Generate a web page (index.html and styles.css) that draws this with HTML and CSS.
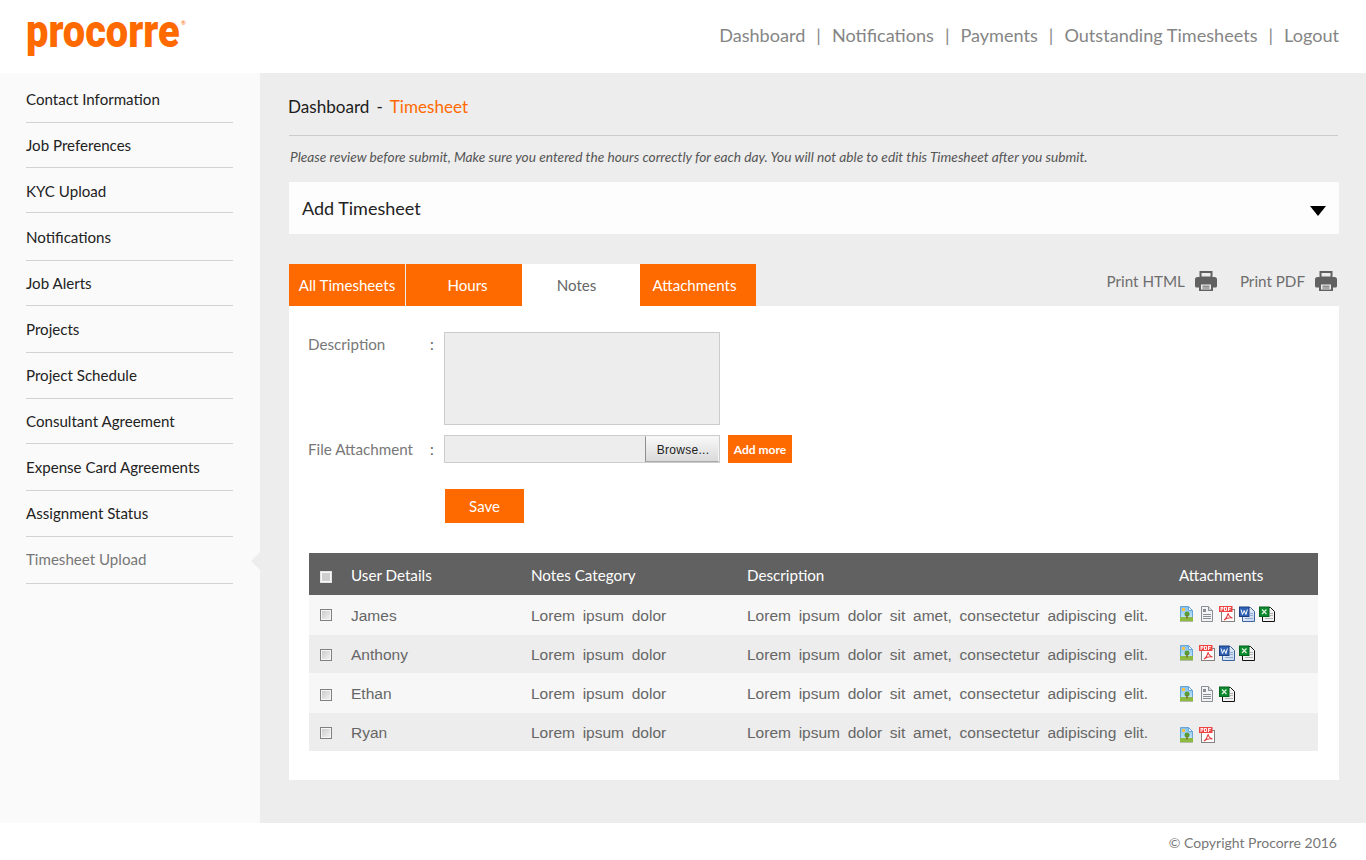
FILE: index.html
```html
<!DOCTYPE html>
<html lang="en">
<head>
<meta charset="utf-8">
<title>Procorre - Timesheet</title>
<link rel="stylesheet" href="styles.css">
</head>
<body>
<svg class="defs" width="0" height="0" aria-hidden="true">
  <defs>
    <linearGradient id="g-sky" x1="0" y1="0" x2="0" y2="1"><stop offset="0" stop-color="#7fc0ee"/><stop offset="1" stop-color="#d8effb"/></linearGradient>
    <linearGradient id="g-page" x1="0" y1="0" x2="1" y2="1"><stop offset="0" stop-color="#f2f6fc"/><stop offset="1" stop-color="#c3d5ee"/></linearGradient>
  </defs>
  <symbol id="i-img" viewBox="0 0 16 16">
    <path d="M1.500 .5h8l4 4v11h-12z" fill="url(#g-sky)" stroke="#6ba5d6"/>
    <path d="M9.500 .5v4h4z" fill="#f4f9fd" stroke="#6ba5d6"/>
    <rect x="1" y="11" width="13" height="4" fill="#8dba40"/>
    <rect x="1" y="15" width="13" height="1" fill="#b3bca6"/>
    <rect x="3" y="2" width="3" height="3" fill="#f7c04a"/>
    <circle cx="8" cy="8" r="2.500" fill="#5c9a33"/>
    <rect x="7.400" y="9.500" width="1.200" height="3" fill="#7a5a2c"/>
  </symbol>
  <symbol id="i-doc" viewBox="0 0 16 16">
    <path d="M2.500 .5h7l4 4v11h-11z" fill="#f2f4f7" stroke="#8b8f94"/>
    <path d="M9.500 .5v4h4" fill="#d8dce0" stroke="#8b8f94"/>
    <rect x="4" y="3" width="3" height="3" fill="#8b8f94"/>
    <path d="M4 8.500h8M4 10.500h8M4 12.500h8" stroke="#8b8f94"/>
  </symbol>
  <symbol id="i-pdf" viewBox="0 0 16 16">
    <rect x="2.500" y="3.500" width="13" height="12" fill="#fff" stroke="#85817f"/>
    <rect x="0" y="0" width="13.500" height="6" fill="#ee4444"/>
    <path d="M2 1v4M2 1.500h2v1.500H2M5.500 1v4M5.500 1.500H7.500V4.500H5.500M9.500 1v4M9.500 1.500h2.500M9.500 3.200h2" fill="none" stroke="#fff" stroke-width=".9"/>
    <path d="M5 14c2.500-1.500 3.500-4 4-7 .3 2.500 1.500 4 4.500 5-3-.5-6 0-8.500 2z" fill="none" stroke="#e53a3a" stroke-width="1.100"/>
  </symbol>
  <symbol id="i-word" viewBox="0 0 16 16">
    <path d="M3.500 1.500h8l4 4v10h-12z" fill="url(#g-page)" stroke="#3b659f"/>
    <path d="M11 7.500h3M11 9.500h3M6 12.500h8" stroke="#8fa9cf"/>
    <rect x=".5" y="1" width="9.500" height="9.500" fill="#2f62b6" stroke="#1d3f80"/>
    <path d="M2 3.500l1.500 5 1.700-4 1.700 4 1.500-5" fill="none" stroke="#fff" stroke-width="1"/>
  </symbol>
  <symbol id="i-xls" viewBox="0 0 16 16">
    <path d="M3.500 1.500h8l4 4v10h-12z" fill="#f1f1f1" stroke="#111"/>
    <path d="M11 7.500h3M11 9.500h3M6 12.500h8" stroke="#b5b5b5"/>
    <rect x=".5" y="1" width="9.500" height="9.500" fill="#0b8a2e" stroke="#07641f"/>
    <path d="M3 3.500l4.500 4.500M7.500 3.500L3 8" stroke="#dff3dd" stroke-width="1.300"/>
  </symbol>
  <symbol id="i-print" viewBox="0 0 22 20">
    <path d="M4.500 0h13v7h-13z" fill="#616161"/>
    <path d="M6.500 2h9v3.500h-9z" fill="#ededed"/>
    <path d="M2.500 6h17A2.500 2.500 0 0 1 22 8.500v6.500a1.500 1.500 0 0 1-1.500 1.500H17.500V12h-13v4.500H1.500A1.500 1.500 0 0 1 0 15V8.500A2.500 2.500 0 0 1 2.500 6z" fill="#616161"/>
    <path d="M4 12h14v8H4z" fill="#616161"/>
    <path d="M6 13.500h10V18.500H6z" fill="#ededed"/>
    <path d="M7.500 15.200h7M7.500 17h7" stroke="#616161"/>
  </symbol>
</svg>

<header class="topbar">
  <a class="logo" href="#"><span class="logo-word">procorre</span><span class="logo-mark">®</span></a>
  <nav class="topnav">
    <a href="#">Dashboard</a><span class="sep">|</span>
    <a href="#">Notifications</a><span class="sep">|</span>
    <a href="#">Payments</a><span class="sep">|</span>
    <a href="#">Outstanding Timesheets</a><span class="sep">|</span>
    <a href="#">Logout</a>
  </nav>
</header>

<div class="shell">
  <aside class="sidebar">
    <ul class="side-list">
      <li class="side-item"><a href="#">Contact Information</a></li>
      <li class="side-item"><a href="#">Job Preferences</a></li>
      <li class="side-item"><a href="#">KYC Upload</a></li>
      <li class="side-item"><a href="#">Notifications</a></li>
      <li class="side-item"><a href="#">Job Alerts</a></li>
      <li class="side-item"><a href="#">Projects</a></li>
      <li class="side-item"><a href="#">Project Schedule</a></li>
      <li class="side-item"><a href="#">Consultant Agreement</a></li>
      <li class="side-item"><a href="#">Expense Card Agreements</a></li>
      <li class="side-item"><a href="#">Assignment Status</a></li>
      <li class="side-item side-active"><a href="#">Timesheet Upload</a></li>
    </ul>
  </aside>

  <main class="content">
    <div class="crumbs"><span class="crumb-first">Dashboard</span><span class="crumb-sep">-</span><span class="crumb-now">Timesheet</span></div>
    <p class="notice">Please review before submit, Make sure you entered the hours correctly for each day. You will not able to edit this Timesheet after you submit.</p>
    <div class="accordion"><span>Add Timesheet</span><span class="caret"></span></div>

    <div class="tabbar">
      <div class="tabs">
        <a class="tab tab-all" href="#">All Timesheets</a>
        <a class="tab tab-hours" href="#">Hours</a>
        <a class="tab tab-notes" href="#">Notes</a>
        <a class="tab tab-att" href="#">Attachments</a>
      </div>
      <div class="prints">
        <a href="#" class="print print-html">Print HTML<svg class="print-ic"><use href="#i-print"/></svg></a>
        <a href="#" class="print">Print PDF<svg class="print-ic"><use href="#i-print"/></svg></a>
      </div>
    </div>

    <section class="panel">
      <div class="form-row row-desc">
        <label class="form-label">Description</label><span class="colon">:</span>
        <div class="textarea"></div>
      </div>
      <div class="form-row row-file">
        <label class="form-label">File Attachment</label><span class="colon">:</span>
        <div class="file"><span class="browse">Browse...</span></div>
        <a class="add-more" href="#">Add more</a>
      </div>
      <a class="save" href="#">Save</a>

      <table class="grid">
        <thead>
          <tr><th class="c-check"><span class="check check-head"></span></th><th class="c-user">User Details</th><th class="c-cat">Notes Category</th><th class="c-desc">Description</th><th>Attachments</th></tr>
        </thead>
        <tbody>
          <tr class="r1"><td class="c-check"><span class="check"></span></td><td>James</td><td class="spaced">Lorem ipsum dolor</td><td class="spaced">Lorem ipsum dolor sit amet, consectetur adipiscing elit.</td>
            <td class="c-files"><div class="files"><svg class="fi"><use href="#i-img"/></svg><svg class="fi"><use href="#i-doc"/></svg><svg class="fi"><use href="#i-pdf"/></svg><svg class="fi"><use href="#i-word"/></svg><svg class="fi"><use href="#i-xls"/></svg></div></td></tr>
          <tr class="r2"><td class="c-check"><span class="check"></span></td><td>Anthony</td><td class="spaced">Lorem ipsum dolor</td><td class="spaced">Lorem ipsum dolor sit amet, consectetur adipiscing elit.</td>
            <td class="c-files"><div class="files"><svg class="fi"><use href="#i-img"/></svg><svg class="fi"><use href="#i-pdf"/></svg><svg class="fi"><use href="#i-word"/></svg><svg class="fi"><use href="#i-xls"/></svg></div></td></tr>
          <tr class="r3"><td class="c-check"><span class="check"></span></td><td>Ethan</td><td class="spaced">Lorem ipsum dolor</td><td class="spaced">Lorem ipsum dolor sit amet, consectetur adipiscing elit.</td>
            <td class="c-files"><div class="files"><svg class="fi"><use href="#i-img"/></svg><svg class="fi"><use href="#i-doc"/></svg><svg class="fi"><use href="#i-xls"/></svg></div></td></tr>
          <tr class="r4"><td class="c-check"><span class="check"></span></td><td>Ryan</td><td class="spaced">Lorem ipsum dolor</td><td class="spaced">Lorem ipsum dolor sit amet, consectetur adipiscing elit.</td>
            <td class="c-files"><div class="files"><svg class="fi"><use href="#i-img"/></svg><svg class="fi"><use href="#i-pdf"/></svg></div></td></tr>
        </tbody>
      </table>
    </section>
  </main>
</div>

<footer class="footer">© Copyright Procorre 2016</footer>
</body>
</html>
```
FILE: styles.css
```css
* { box-sizing: border-box; }
html, body { margin: 0; padding: 0; }
body { font-family: Lato, "Open Sans", sans-serif; background: #fff; color: #666; width: 1366px; height: 860px; overflow: hidden; }
a { color: inherit; text-decoration: none; }
.defs { position: absolute; }

.topbar { height: 73px; display: flex; justify-content: space-between; align-items: center; padding: 0 27px 0 26px; background: #fff; }
.logo { display: flex; align-items: flex-start; height: 46px; margin-bottom: 11px; color: #ff6a00; }
.logo-word { display: block; width: 155px; font-family: Roboto, sans-serif; font-weight: 900; font-size: 46px; line-height: 46px; white-space: nowrap; transform: scaleX(.865); transform-origin: left center; }
.logo-mark { font-size: 6px; line-height: 8px; margin-top: 11px; }
.topnav { display: flex; align-items: center; font-size: 18.1px; color: #858585; padding-bottom: 3px; }
.sep { margin: 0 11px; }

.shell { display: flex; height: 750px; }
.sidebar { width: 260px; background: #fafafa; padding: 0 27px 0 26px; flex: none; }
.side-list { list-style: none; margin: 0; padding: 0; }
.side-item { border-bottom: 1px solid #d2d2d2; font-size: 15.1px; line-height: 18px; color: #222; }
.side-item:nth-child(1) { height: 50px; padding-top: 17px; }
.side-item:nth-child(2) { height: 45px; padding-top: 13px; }
.side-item:nth-child(3) { height: 45px; padding-top: 14px; }
.side-item:nth-child(4) { height: 48px; padding-top: 15px; }
.side-item:nth-child(5) { height: 45px; padding-top: 13px; }
.side-item:nth-child(6) { height: 47px; padding-top: 14px; }
.side-item:nth-child(7) { height: 46px; padding-top: 13px; }
.side-item:nth-child(8) { height: 45px; padding-top: 13px; }
.side-item:nth-child(9) { height: 47px; padding-top: 14px; }
.side-item:nth-child(10) { height: 46px; padding-top: 13px; }
.side-item:nth-child(11) { height: 47px; padding-top: 13px; }
.side-active { color: #777; position: relative; }
.side-active::after { content: ""; position: absolute; right: -27px; top: 15px; border: 9px solid transparent; border-right-color: #ededed; border-left-width: 0; }

.content { flex: 1; background: #ededed; padding: 0 27px 0 29px; }
.crumbs { height: 63px; padding-top: 24px; border-bottom: 1px solid #ccc; margin-right: 1px; font-size: 17.1px; line-height: 20px; color: #1c1c1c; display: flex; }
.crumb-first { margin-left: -1px; }
.crumb-sep { margin: 0 7px; }
.crumb-now { color: #ff6a00; }
.notice { margin: 0; padding: 0 1px; height: 46px; font-size: 13.73px; line-height: 41px; font-style: italic; color: #555; white-space: nowrap; }
.accordion { height: 52px; background: #fdfdfd; display: flex; justify-content: space-between; align-items: center; padding: 0 13px 1px; font-size: 18px; color: #222; }
.caret { width: 0; height: 0; border: 8px solid transparent; border-top: 10px solid #000; border-bottom-width: 0; margin-top: 7px; }

.tabbar { display: flex; justify-content: space-between; margin-top: 30px; height: 42px; }
.tabs { display: flex; }
.tab { background: #ff6a00; color: #fff; font-size: 15.1px; display: flex; align-items: center; justify-content: center; height: 42px; }
.tab-all { width: 116px; margin-right: 1px; }
.tab-hours { width: 116px; padding-left: 7px; }
.tab-notes { width: 118px; padding-right: 9px; background: #fff; color: #666; }
.tab-att { width: 116px; padding-right: 7px; }
.prints { display: flex; align-items: flex-start; color: #6e6e6e; font-size: 15.2px; }
.print { display: flex; align-items: center; margin-left: 21px; height: 33px; }
.print-ic { width: 22px; height: 20px; margin-left: 10px; margin-right: 2px; }

.panel { background: #fff; height: 474px; padding: 26px 21px 0 19px; }
.form-row { display: flex; align-items: flex-start; }
.row-desc { height: 103px; }
.row-file { height: 54px; }
.form-label { width: 122px; font-size: 15.2px; color: #777; line-height: 24px; }
.colon { width: 14px; font-size: 15px; color: #666; line-height: 24px; }
.row-file .form-label, .row-file .colon { line-height: 29px; }
.textarea { width: 276px; height: 93px; background: #ededed; border: 1px solid #ccc; }
.file { width: 276px; height: 28px; background: #ededed; border: 1px solid #ccc; display: flex; justify-content: flex-end; }
.browse { width: 74px; height: 26px; padding-left: 2px; font-family: "Liberation Sans", sans-serif; font-size: 12px; letter-spacing: .3px; color: #222; line-height: 27px; text-align: center; background: linear-gradient(#f8f8f8, #dadada); border: 1px solid #f4f4f4; border-left-color: #8f8f8f; border-bottom-color: #a8a8a8; }
.add-more { width: 64px; height: 28px; margin-left: 8px; background: #ff6a00; color: #fff; font-size: 12px; font-weight: 700; text-align: center; line-height: 29px; }
.save { display: block; width: 79px; height: 34px; margin-left: 137px; background: #ff6a00; color: #fff; font-size: 15px; line-height: 35px; text-align: center; }

.grid { width: 1009px; margin: 30px 0 0 1px; border-collapse: collapse; table-layout: fixed; }
.grid th { background: #616161; color: #fff; font-weight: 400; font-size: 15.2px; text-align: left; height: 42px; padding: 2px 0 0; }
.grid td { font-family: "Liberation Sans", sans-serif; font-size: 15.5px; color: #666; padding: 2px 0 0; }
.c-check { width: 42px; }
.c-user { width: 180px; }
.c-cat { width: 216px; }
.c-desc { width: 432px; }
.spaced { word-spacing: 3.4px; }
.r1 td, .r3 td { background: #f7f7f7; height: 40px; }
.r2 td, .r4 td { background: #ededed; height: 38px; }
.grid th.c-check { vertical-align: top; padding-top: 18px; }
.grid td.c-check { vertical-align: top; padding-top: 14px; }
.grid .r3 td.c-check { padding-top: 16px; }
.check { display: block; width: 12px; height: 12px; margin-left: 11px; border: 1px solid #808080; background: linear-gradient(135deg, #c8c8c8, #f4f4f4); box-shadow: inset 0 0 0 1px #f6f6f6; }
.check-head { border-color: #e4e4e4; background: #cfcfcf; box-shadow: inset 0 0 0 1px #f7f7f7; }
.grid td.c-files { vertical-align: top; }
.grid .r1 td.c-files { padding-top: 11px; }
.grid .r2 td.c-files { padding-top: 10px; }
.grid .r3 td.c-files { padding-top: 13px; }
.grid .r4 td.c-files { padding-top: 14px; }
.files { display: flex; gap: 4px; }
.fi { width: 16px; height: 16px; display: block; }

.footer { height: 37px; background: #fff; text-align: right; padding: 11px 29px 0 0; font-size: 14px; line-height: 17px; color: #777; }
```
